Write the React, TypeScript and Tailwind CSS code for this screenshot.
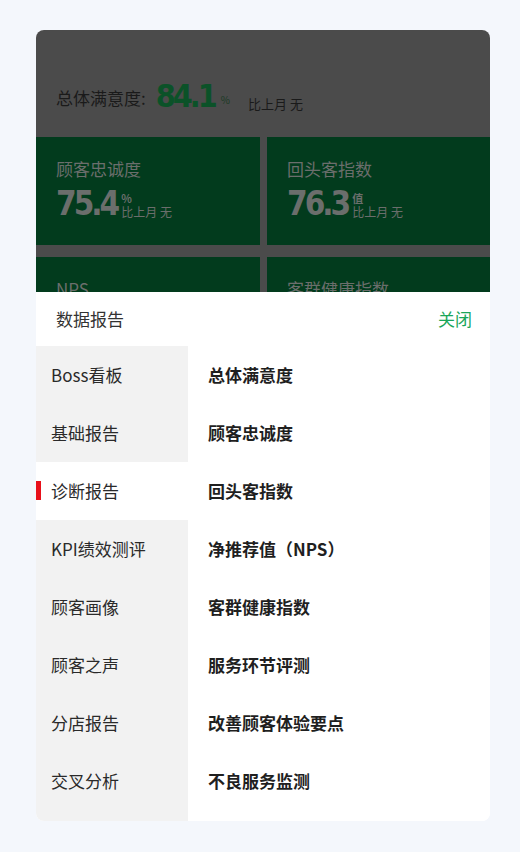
import React from "react";

const cjk = { fontFamily: '"Noto Sans CJK SC", "Noto Sans", sans-serif' };
const num = { fontFamily: '"DejaVu Sans Condensed", "DejaVu Sans", sans-serif' };

const leftItems = ["Boss看板", "基础报告", "诊断报告", "KPI绩效测评", "顾客画像", "顾客之声", "分店报告", "交叉分析"];
const rightItems = ["总体满意度", "顾客忠诚度", "回头客指数", "净推荐值（NPS）", "客群健康指数", "服务环节评测", "改善顾客体验要点", "不良服务监测"];

function Tile({ title, value, unit }: { title: string; value?: string; unit?: string }) {
  return (
    <div className="bg-[#023b1d] h-[108px] pl-[20px] pt-[20px] text-[#6b6e6c]">
      <div className="text-[17px] leading-[24px]">{title}</div>
      {value && (
        <div className="flex items-end mt-[8px]">
          <span style={num} className="text-[33px] font-bold leading-[30px] tracking-[-3px]">{value}</span>
          <div className="flex flex-col ml-[4px]">
            <span className="text-[11px] font-bold leading-[12px]">{unit}</span>
            <span className="text-[12px] leading-[15px]">比上月 无</span>
          </div>
        </div>
      )}
    </div>
  );
}

export default function App() {
  return (
    <div style={cjk} className="min-h-[852px] bg-[#f4f7fc] pt-[30px] pl-[36px] pr-[30px]">
      <div className="h-[791px] rounded-[8px] overflow-hidden bg-white flex flex-col">
        <div className="h-[262px] bg-[#4b4b4b] flex flex-col shrink-0 overflow-hidden">
          <div className="h-[107px] shrink-0 flex items-end pb-[26px] pl-[20px]">
            <span className="text-[17px] text-[#1a1a1a] leading-[24px] mb-[1px]">总体满意度:</span>
            <span style={num} className="ml-[10px] text-[32px] font-bold text-[#0b5228] leading-[30px] tracking-[-3px]">84.1</span>
            <span className="ml-[6px] text-[10px] text-[#1a3a24] leading-[14px] mb-[4px]">%</span>
            <span className="ml-[18px] text-[13px] text-[#1a1a1a] leading-[18px] mb-[-2px]">比上月 无</span>
          </div>
          <div className="shrink-0 grid grid-cols-[224px_1fr] gap-x-[7px] gap-y-[12px]">
            <Tile title="顾客忠诚度" value="75.4" unit="%" />
            <Tile title="回头客指数" value="76.3" unit="值" />
            <Tile title="NPS" />
            <Tile title="客群健康指数" />
          </div>
        </div>
        <div className="flex-1 flex flex-col bg-white">
          <div className="h-[54px] shrink-0 flex items-center justify-between pl-[20px] pr-[18px]">
            <span className="text-[17px] text-[#333333]">数据报告</span>
            <span className="text-[17px] text-[#1aa65a]">关闭</span>
          </div>
          <div className="flex-1 flex">
            <div className="w-[152px] bg-[#f2f2f2] flex flex-col">
              {leftItems.map((t, i) => (
                <div
                  key={t}
                  className={
                    "relative h-[58px] shrink-0 flex items-center pl-[15px] text-[17px] text-[#2a2a2a] " +
                    (i === 2 ? "bg-white" : "")
                  }
                >
                  {i === 2 && <span className="absolute left-0 top-[19px] w-[5px] h-[19px] bg-[#e8101a]" />}
                  {t}
                </div>
              ))}
            </div>
            <div className="flex-1 flex flex-col pl-[20px]">
              {rightItems.map((t) => (
                <div key={t} className="h-[58px] shrink-0 flex items-center text-[17px] font-bold text-[#1f1f1f]">
                  {t}
                </div>
              ))}
            </div>
          </div>
        </div>
      </div>
    </div>
  );
}
